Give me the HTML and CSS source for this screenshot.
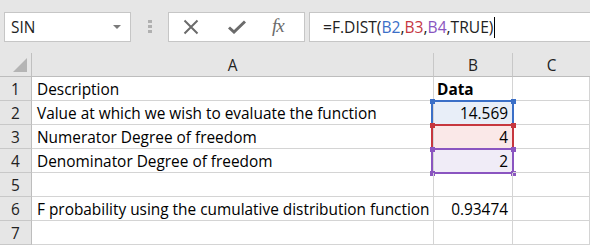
FILE: index.html
```html
<!DOCTYPE html>
<html>
<head>
<meta charset="utf-8">
<link rel="stylesheet" href="styles.css">
</head>
<body>
<div class="topbar">
  <div class="namebox"><span class="name">SIN</span><span class="caret"></span></div>
  <div class="grip"><i></i><i></i><i></i></div>
  <div class="btns">
    <svg class="ico" width="16" height="16" viewBox="0 0 16 16"><path d="M1.5 1.5L14.5 14.5M14.5 1.5L1.5 14.5" stroke="#6b6b6b" stroke-width="2" fill="none"/></svg>
    <svg class="ico chk" width="18" height="14" viewBox="0 0 18 14"><path d="M1 7.5L6 12L17 1.5" stroke="#6b6b6b" stroke-width="3" fill="none"/></svg>
    <span class="fx">fx</span>
  </div>
  <div class="formula"><span class="tx">=F.DIST(<span class="c1">B2</span>,<span class="c2">B3</span>,<span class="c3">B4</span>,TRUE)</span><span class="cursor"></span></div>
</div>
<div class="sheet">
  <div class="corner"><span class="tri"></span></div>
  <div class="colh">A</div>
  <div class="colh">B</div>
  <div class="colh last">C</div>

  <div class="rowh">1</div><div class="cell">Description</div><div class="cell bold">Data</div><div class="cell"></div>
  <div class="rowh">2</div><div class="cell">Value at which we wish to evaluate the function</div><div class="cell num fill-b">14.569<div class="rng rb"><i class="tl"></i><i class="tr"></i><i class="bl"></i><i class="br"></i></div></div><div class="cell"></div>
  <div class="rowh">3</div><div class="cell">Numerator Degree of freedom</div><div class="cell num fill-r">4<div class="rng rr"><i class="tl"></i><i class="tr"></i><i class="bl"></i><i class="br"></i></div></div><div class="cell"></div>
  <div class="rowh">4</div><div class="cell">Denominator Degree of freedom</div><div class="cell num fill-p">2<div class="rng rp"><i class="tl"></i><i class="tr"></i><i class="bl"></i><i class="br"></i></div></div><div class="cell"></div>
  <div class="rowh">5</div><div class="cell"></div><div class="cell"></div><div class="cell"></div>
  <div class="rowh">6</div><div class="cell">F probability using the cumulative distribution function</div><div class="cell num">0.93474</div><div class="cell"></div>
  <div class="rowh">7</div><div class="cell"></div><div class="cell"></div><div class="cell"></div>
</div>
</body>
</html>
```
FILE: styles.css
```css
html, body {
  margin: 0;
  padding: 0;
}
body {
  width: 590px;
  height: 246px;
  overflow: hidden;
  background: #ffffff;
  font-family: "Open Sans", "Noto Sans", sans-serif;
  font-size: 15.4px;
  color: #000;
}
.topbar {
  height: 53px;
  box-sizing: border-box;
  background: #e6e6e6;
  display: flex;
  align-items: flex-start;
  padding-top: 12px;
  padding-left: 4px;
}
.namebox {
  width: 127px;
  height: 30px;
  box-sizing: border-box;
  background: #fff;
  border: 1px solid #c6c6c6;
  display: flex;
  align-items: center;
  padding-left: 6px;
  padding-right: 9px;
}
.name {
  flex: 1;
  color: #222;
}
.caret {
  width: 0;
  height: 0;
  border-left: 4px solid transparent;
  border-right: 4px solid transparent;
  border-top: 4px solid #7a7a7a;
}
.grip {
  width: 4px;
  margin-left: 17px;
  margin-top: 8px;
  display: flex;
  flex-direction: column;
  gap: 2px;
}
.grip i {
  width: 4px;
  height: 3px;
  background: #b0b0b0;
}
.btns {
  margin-left: 16px;
  width: 137px;
  height: 30px;
  box-sizing: border-box;
  background: #fff;
  border: 1px solid #c6c6c6;
  display: flex;
  align-items: center;
  padding-left: 14px;
}
.ico {
  display: block;
}
.chk {
  margin-left: 29px;
}
.fx {
  margin-left: 26px;
  font-family: "Liberation Serif", serif;
  font-style: italic;
  font-size: 19px;
  color: #6b6b6b;
  letter-spacing: -1px;
  margin-top: -2px;
}
.formula {
  margin-left: 4px;
  flex: 1;
  height: 30px;
  box-sizing: border-box;
  background: #fff;
  border: 1px solid #c6c6c6;
  border-right: none;
  display: flex;
  align-items: center;
  padding-left: 13px;
}
.tx {
  color: #222;
  font-size: 15.6px;
}
.c1 { color: #3b6fc7; }
.c2 { color: #c6373f; }
.c3 { color: #8a55c0; }
.cursor {
  width: 1px;
  height: 21px;
  background: #000;
  margin-left: 1px;
}
.sheet {
  display: grid;
  grid-template-columns: 32px 402px 79px 77px;
  grid-auto-rows: 24px;
}
.corner, .colh, .rowh {
  background: #e6e6e6;
  box-sizing: border-box;
  color: #222;
}
.corner {
  border-right: 1px solid #c0c0c0;
  border-bottom: 1px solid #bdbdbd;
  position: relative;
}
.tri {
  position: absolute;
  right: 4px;
  bottom: 4px;
  width: 0;
  height: 0;
  border-left: 14px solid transparent;
  border-bottom: 14px solid #b4b4b4;
}
.colh {
  border-right: 1px solid #c8c8c8;
  border-bottom: 1px solid #bdbdbd;
  text-align: center;
  line-height: 21px;
  padding-top: 2px;
}
.colh.last {
  border-right: none;
}
.rowh {
  border-right: 1px solid #bdbdbd;
  border-bottom: 1px solid #c8c8c8;
  text-align: center;
  line-height: 21px;
  padding-top: 2px;
}
.cell {
  box-sizing: border-box;
  border-right: 1px solid #d4d4d4;
  border-bottom: 1px solid #d4d4d4;
  line-height: 21px;
  padding: 2px 0 0 5px;
  white-space: nowrap;
  position: relative;
}
.bold {
  font-weight: bold;
  padding-left: 3px;
}
.num {
  text-align: right;
  padding-right: 4px;
}
.fill-b { background: #e8eef8; }
.fill-r { background: #fae8e8; }
.fill-p { background: #f0ecf7; }
.rng {
  position: absolute;
  left: -3px;
  right: -2px;
  top: -1px;
  bottom: -2px;
  border: 2px solid;
}
.rb { border-color: #3b6fc7; }
.rr { border-color: #c6373f; }
.rp { border-color: #8a55c0; }
.rng i {
  position: absolute;
  width: 5px;
  height: 5px;
}
.rb i { background: #3b6fc7; }
.rr i { background: #c6373f; }
.rp i { background: #8a55c0; }
.rng .tl { left: -3.5px; top: -3.5px; }
.rng .tr { right: -3.5px; top: -3.5px; }
.rng .bl { left: -3.5px; bottom: -3.5px; }
.rng .br { right: -3.5px; bottom: -3.5px; }
```
